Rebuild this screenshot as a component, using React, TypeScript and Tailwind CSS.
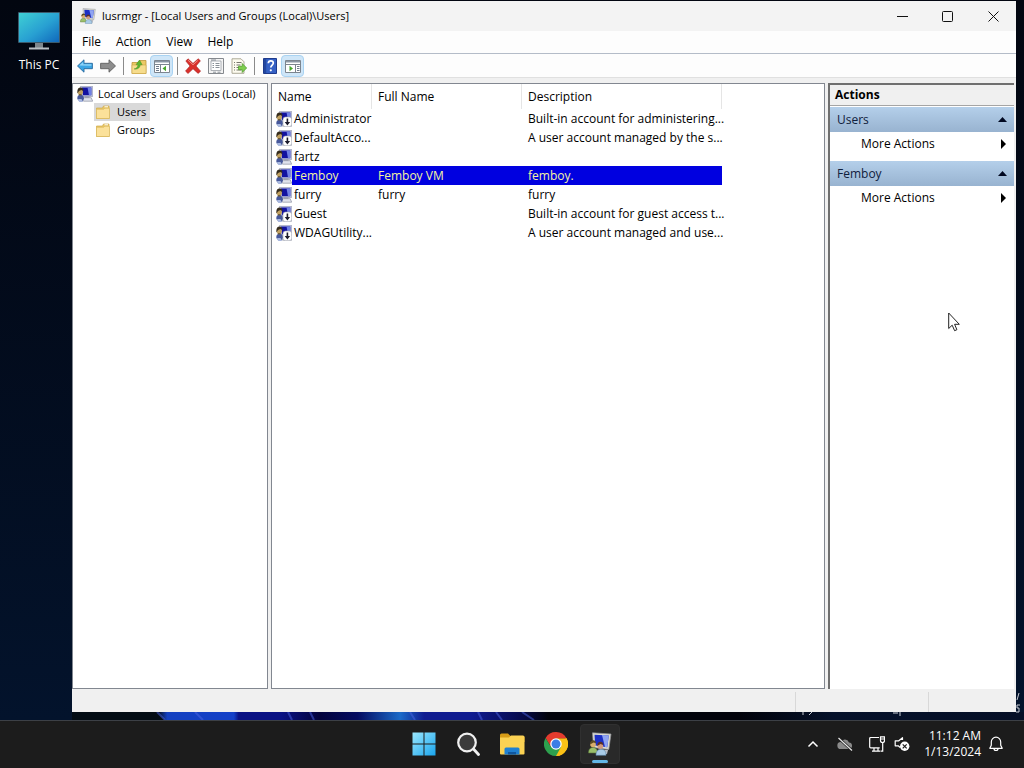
import type { ReactNode } from "react";

type User = {
  name: string;
  fullName: string;
  description: string;
  disabled?: boolean;
};

const USERS: User[] = [
  { name: "Administrator", fullName: "", description: "Built-in account for administering...", disabled: true },
  { name: "DefaultAcco...", fullName: "", description: "A user account managed by the s...", disabled: true },
  { name: "fartz", fullName: "", description: "" },
  { name: "Femboy", fullName: "Femboy VM", description: "femboy." },
  { name: "furry", fullName: "furry", description: "furry" },
  { name: "Guest", fullName: "", description: "Built-in account for guest access t...", disabled: true },
  { name: "WDAGUtility...", fullName: "", description: "A user account managed and use...", disabled: true },
];

const SELECTED = "Femboy";

/* ---------- icons ---------- */

// Monitor with two people in front of it
function GroupIcon({ size = 16 }: { size?: number }) {
  return (
    <svg width={size} height={size} viewBox="0 0 24 24" aria-hidden="true">
      <path d="M4.500.8 23 2 20.800 17.500 5.500 15.500z" fill="#dcdcd0" stroke="#8f9098" strokeWidth=".7" />
      <path d="M6.500 2.700 20.800 3.500 19.200 15.300 7.200 13.600z" fill="#1c2fc4" />
      <path d="M14 3.100 20.800 3.500 19.200 15.300 17 15z" fill="#8fa4f2" />
      <path d="M12 17.500 20 18l-1 4-6 .5z" fill="#b9bcc2" />
      <path d="M.5 21c0-4 2-5.500 4.500-5.500S9.500 17 9.500 21z" fill="#9bbf6a" stroke="#55713a" strokeWidth=".6" />
      <circle cx="5" cy="12.500" r="2.800" fill="#d9ae6c" />
      <path d="M2 12.500c0-3 1.500-4.300 3.200-4.300s3 1.300 2.800 3L5.500 10.500z" fill="#5b4a22" />
      <path d="M8 23.300c0-4.300 2-6 5-6s5 1.500 5 6z" fill="#a9cbe6" stroke="#5d87a8" strokeWidth=".6" />
      <circle cx="12.300" cy="14" r="2.900" fill="#d19a80" />
      <path d="M9.200 14c0-3 1.500-4.200 3.200-4.200 1.900 0 3.100 1.400 2.900 3.300l-2.800-1.100z" fill="#5a3024" />
    </svg>
  );
}

// One user beside a computer; disabled accounts carry the arrow badge
function UserIcon({ disabled = false }: { disabled?: boolean }) {
  return (
    <svg className="shrink-0" width="16" height="16" viewBox="0 0 16 16" aria-hidden="true">
      <path d="M3.500.3h12.200v10.200H5z" fill="#c3c9e0" stroke="#8e94ac" strokeWidth=".6" />
      <path d="M5 1.500h9.300v7.800H6z" fill="#1212a0" />
      <path d="M10.500 1.500h3.800v7.800H12z" fill="#6f80e4" />
      <path d="M7.500 10.500h5v1.200h-5z" fill="#8a90a8" />
      <path d="M5.500 11.700h8.700l1.500 3.500H6.500z" fill="#dfe2ec" stroke="#7c8194" strokeWidth=".6" />
      <path d="M.3 13c-.2-3.200 1-4.300 3.200-4.300 1.800 0 3.300 1 3.500 3.800l-1.500 3h-3z" fill="#46589c" />
      <path d="M1 13h3.500l1.500 2.700H2z" fill="#a9b9e0" />
      <path d="M1.200 3.200h4l.8 3-1.500 3H2L.8 7z" fill="#c0a060" />
      <path d="M.4 7.500C-.1 3.500 1.300 1.500 3.500 1.500c2 0 3.200 1.400 2.900 3.500L4.300 4 2 5z" fill="#352c1c" />
      <path d="M1.800 8.800h2.800" stroke="#352c1c" strokeWidth=".8" />
      {disabled && (
        <>
          <rect x="7" y="6" width="8.700" height="9.700" rx="2.500" fill="#fff" stroke="#a0a4b0" strokeWidth=".6" />
          <path d="M10.600 7.500h1.600V11h1.900l-2.700 3.500L8.700 11h1.900z" fill="#1b1b2b" />
        </>
      )}
    </svg>
  );
}

function FolderIcon() {
  return (
    <svg className="shrink-0" width="16" height="16" viewBox="0 0 16 16" aria-hidden="true">
      <path d="M1.500 4h6l1-2h5.500v12.500H1.500z" fill="#e9c765" stroke="#d0a94a" strokeWidth=".7" />
      <path d="M9.500 2.800h3.500" stroke="#fff" strokeWidth="1" />
      <path d="M1.500 5.200h7.300l1-1h4.700v10.300h-13z" fill="#fbe19a" stroke="#d9b75c" strokeWidth=".7" />
    </svg>
  );
}

function ArrowIcon({ forward = false }: { forward?: boolean }) {
  return (
    <svg width="16" height="16" viewBox="0 0 16 16" aria-hidden="true">
      {forward ? (
        <path d="M15.500 8 9 1.800v3.500H.6v5.400H9v3.500z" fill="#8d8d8d" stroke="#5f5f5f" strokeWidth=".9" strokeLinejoin="round" />
      ) : (
        <>
          <path d="M.5 8 7 1.800v3.500h8.400v5.400H7v3.500z" fill="#3ba5e4" stroke="#27689c" strokeWidth=".9" strokeLinejoin="round" />
          <path d="M2.200 7.600 6.200 4v2.300h8.200v1.500z" fill="#8fd3f7" />
        </>
      )}
    </svg>
  );
}

function UpFolderIcon() {
  return (
    <svg width="16" height="16" viewBox="0 0 16 16" aria-hidden="true">
      <path d="M1 4.500h6l1.500-2H15v13H1z" fill="#ecc964" stroke="#bf9738" strokeWidth=".8" />
      <path d="M1 7h14v8.500H1z" fill="#f6dc8c" stroke="#cfa94a" strokeWidth=".6" />
      <path d="M3 11c2.500-.5 3.800-2 4-4.200L5 6.600 8.500 2l2.700 4.800-1.900-.1C9 9.500 7 11.700 3 11z" fill="#5cb531" stroke="#3b8520" strokeWidth=".4" />
    </svg>
  );
}

function PaneIcon({ right = false }: { right?: boolean }) {
  return (
    <svg width="18" height="16" viewBox="0 0 18 16" aria-hidden="true">
      <path d="M1.500 2.500h15v12h-15z" fill="#fff" stroke="#7c858f" />
      <path d="M2 3h14v1.500H2z" fill="#8b97a5" />
      <path d="M2 6.500h14" stroke="#7c858f" />
      <path d={right ? "M11.500 6.500v8" : "M7.500 6.500v8"} stroke="#7c858f" />
      <path d={right ? "M13 8.500h2.500M13 10.500h2.500M13 12.500h2.500" : "M3 8.500h3M3 10.500h3M3 12.500h3"} stroke="#6f7c8c" />
      <path d={right ? "M5.500 7.800v5.400L9 10.500z" : "M13 7.800v5.400L9.500 10.500z"} fill="#47a82b" />
    </svg>
  );
}

function DeleteIcon() {
  return (
    <svg width="16" height="16" viewBox="0 0 16 16" aria-hidden="true">
      <path d="M3 .8 8 5.400 13.200.8l2.200 2L11 8l4.600 5.200-2.500 2.200L8 10.800l-5 4.700-2.500-2.400L5 8 .8 3z" fill="#d9302b" stroke="#a81e1e" strokeWidth=".6" strokeLinejoin="round" />
      <path d="M3 2.200 8 6.800l4.800-4.300" fill="none" stroke="#f08a80" strokeWidth="1" />
    </svg>
  );
}

function PropertiesIcon() {
  return (
    <svg width="16" height="16" viewBox="0 0 16 16" aria-hidden="true">
      <path d="M.5.5h15v15H.5z" fill="#f4f4f4" stroke="#85898e" />
      <path d="M3 3h10v9.500H3z" fill="#fff" stroke="#9aa0a6" strokeWidth=".8" />
      <path d="M3 2h5M4.500 5.500H6M7.500 5.500h4M4.500 7.500H6M7.500 7.500h4M4.500 9.500H6M7.500 9.500h4M5 14.200h3M9.500 14.200h3" stroke="#7d848c" strokeWidth=".9" />
    </svg>
  );
}

function ExportIcon() {
  return (
    <svg width="16" height="16" viewBox="0 0 16 16" aria-hidden="true">
      <path d="M1 .8h9l3 3v11.500H1z" fill="#fdfbef" stroke="#a4a08c" strokeWidth=".9" />
      <path d="M3 4.500h1M5.500 4.500h5M3 7h1M5.500 7h4M3 9.500h1M5.500 9.500h3M3 12h1M5.500 12h5" stroke="#77776c" />
      <path d="M7.500 8.300h3.700V5.500l4.500 4.500-4.500 4.500v-2.800H7.500z" fill="#7fce4e" stroke="#4b9a2a" strokeWidth=".7" />
    </svg>
  );
}

function HelpIcon() {
  return (
    <svg width="16" height="16" viewBox="0 0 16 16" aria-hidden="true">
      <path d="M1.500.5h13v15h-13z" fill="#3560c4" stroke="#1f3b8c" />
      <path d="M2 1h2.200v14H2z" fill="#23479f" />
      <path d="M6.300 5.300c0-1.700 1-2.500 2.500-2.500s2.500.8 2.500 2.200c0 2-2.500 2.200-2.500 4.500" fill="none" stroke="#fff" strokeWidth="1.700" />
      <circle cx="8.800" cy="12.300" r="1.100" fill="#fff" />
    </svg>
  );
}

function ThisPcIcon() {
  return (
    <svg width="42" height="39" viewBox="0 0 42 39" aria-hidden="true">
      <defs>
        <linearGradient id="pc" x1="0" y1="0" x2="1" y2="1">
          <stop offset="0" stopColor="#3fd0d4" />
          <stop offset=".55" stopColor="#28a0d2" />
          <stop offset="1" stopColor="#1068bc" />
        </linearGradient>
      </defs>
      <path d="M17 31h8v5h-8z" fill="#7d858c" />
      <path d="M11 35.500h20v2H11z" fill="#b8bec4" />
      <rect x="0" y="0" width="42" height="31" rx="1" fill="#3b5a6c" />
      <rect x="1" y="1" width="40" height="29" fill="url(#pc)" />
    </svg>
  );
}

/* ---------- small pieces ---------- */

function ToolButton({ label, active, children }: { label: string; active?: boolean; children: ReactNode }) {
  return (
    <button
      type="button"
      aria-label={label}
      className={`flex h-[22px] w-[23px] items-center justify-center ${active ? "rounded-sm border border-[#a9d3f2] bg-[#cfe6f8]" : ""}`}
    >
      {children}
    </button>
  );
}

function ToolSeparator() {
  return (
    <div className="flex w-2 justify-center">
      <div className="h-[18px] w-px bg-[#8a8a8a]" />
    </div>
  );
}

function ActionGroup({ title }: { title: string }) {
  return (
    <section className="mb-[5px]">
      <button type="button" className="flex h-[25px] w-full items-center justify-between bg-linear-to-b from-[#b4cfea] to-[#98b3d0] px-[7px] text-[#10203c]">
        {title}
        <svg width="9" height="5" viewBox="0 0 9 5" aria-hidden="true">
          <path d="M4.500 0 9 5H0z" fill="#000820" />
        </svg>
      </button>
      <button type="button" className="flex h-6 w-full items-center justify-between pr-2 pl-[31px]">
        More Actions
        <svg width="5" height="10" viewBox="0 0 5 10" aria-hidden="true">
          <path d="M0 0v10l5-5z" fill="#000" />
        </svg>
      </button>
    </section>
  );
}

function TaskButton({ label, active, children }: { label: string; active?: boolean; children: ReactNode }) {
  return (
    <button
      type="button"
      aria-label={label}
      className={`relative flex h-10 w-10 items-center justify-center rounded ${active ? "border border-[#303030] bg-[#292929]" : ""}`}
    >
      {children}
      {active && <span className="absolute bottom-0 h-[3px] w-4 rounded-full bg-[#63b7e6]" />}
    </button>
  );
}

/* ---------- window ---------- */

function TitleBar() {
  return (
    <header className="flex h-[30px] items-center bg-[#f3f3f3] pl-2">
      <GroupIcon />
      <h1 className="ml-[6px] flex-1 text-[11px]">lusrmgr - [Local Users and Groups (Local)\Users]</h1>
      <button type="button" aria-label="Minimize" className="flex h-full w-[46px] items-center justify-center">
        <svg width="11" height="11" viewBox="0 0 11 11"><path d="M0 5.500h11" stroke="#111" /></svg>
      </button>
      <button type="button" aria-label="Maximize" className="flex h-full w-[45px] items-center justify-center">
        <svg width="11" height="11" viewBox="0 0 11 11"><rect x=".5" y=".5" width="10" height="10" rx="1" fill="none" stroke="#111" /></svg>
      </button>
      <button type="button" aria-label="Close" className="flex h-full w-[46px] items-center justify-center">
        <svg width="11" height="11" viewBox="0 0 11 11"><path d="M.5.5l10 10M10.500.5l-10 10" stroke="#111" /></svg>
      </button>
    </header>
  );
}

function MenuBar() {
  return (
    <nav className="flex h-[23px] items-center gap-[15px] border-b border-[#b4bcc8] bg-[#fdfdfd] pl-[10px]">
      {["File", "Action", "View", "Help"].map((item) => (
        <button key={item} type="button">{item}</button>
      ))}
    </nav>
  );
}

function ToolBar() {
  return (
    <div className="flex h-6 items-center border-b border-[#e0e0e0] bg-[#fdfdfd] pl-px">
      <ToolButton label="Back"><ArrowIcon /></ToolButton>
      <ToolButton label="Forward"><ArrowIcon forward /></ToolButton>
      <ToolSeparator />
      <ToolButton label="Up one level"><UpFolderIcon /></ToolButton>
      <ToolButton label="Show console tree" active><PaneIcon /></ToolButton>
      <ToolSeparator />
      <ToolButton label="Delete"><DeleteIcon /></ToolButton>
      <ToolButton label="Properties"><PropertiesIcon /></ToolButton>
      <ToolButton label="Export list"><ExportIcon /></ToolButton>
      <ToolSeparator />
      <ToolButton label="Help"><HelpIcon /></ToolButton>
      <ToolButton label="Show action pane" active><PaneIcon right /></ToolButton>
    </div>
  );
}

function ConsoleTree() {
  return (
    <aside className="w-[196px] shrink-0 border border-[#828790] bg-white text-[11px]">
      <button type="button" className="mt-px flex h-[18px] items-center gap-[5px] pl-1 whitespace-nowrap">
        <UserIcon />
        Local Users and Groups (Local)
      </button>
      <ul className="pl-[21px]">
        <li>
          <button type="button" className="flex h-[18px] items-center gap-[6px] bg-[#d9d9d9] pr-1 pl-px">
            <FolderIcon />
            Users
          </button>
        </li>
        <li>
          <button type="button" className="flex h-[18px] items-center gap-[6px] pr-1 pl-px">
            <FolderIcon />
            Groups
          </button>
        </li>
      </ul>
    </aside>
  );
}

function UserTable() {
  return (
    <main className="min-w-0 flex-1 border border-[#828790] bg-white">
      <table className="w-[450px] table-fixed border-separate border-spacing-0 text-left whitespace-nowrap">
        <thead>
          <tr className="h-[25px]">
            <th className="w-[100px] border-r border-[#e5e5e5] p-0 pl-[6px] font-normal">Name</th>
            <th className="w-[150px] border-r border-[#e5e5e5] p-0 pl-[6px] font-normal">Full Name</th>
            <th className="w-[200px] border-r border-[#e5e5e5] p-0 pl-[6px] font-normal">Description</th>
          </tr>
        </thead>
        <tbody>
          {USERS.map((user) => {
            const fill = user.name === SELECTED ? "bg-[#0000e0] text-[#f4f4a0]" : "";
            return (
              <tr key={user.name} className="h-[19px]">
                <td className="p-0">
                  <div className="flex h-[19px] items-center pl-1">
                    <UserIcon disabled={user.disabled} />
                    <span className={`flex h-full flex-1 items-center pl-0.5 ${fill}`}>{user.name}</span>
                  </div>
                </td>
                <td className={`p-0 pl-[6px] ${fill}`}>{user.fullName}</td>
                <td className={`p-0 pl-[6px] ${fill}`}>{user.description}</td>
              </tr>
            );
          })}
        </tbody>
      </table>
    </main>
  );
}

function ActionsPane() {
  return (
    <aside className="mr-0.5 w-[186px] shrink-0 border-t-2 border-l-2 border-[#6f6f6f] bg-white">
      <h2 className="mb-px flex h-[21px] items-center border-b border-[#a5a5a5] bg-[#f0f0f0] pl-[5px] font-bold">Actions</h2>
      <ActionGroup title="Users" />
      <ActionGroup title="Femboy" />
    </aside>
  );
}

function ConsoleWindow() {
  return (
    <div className="mt-px mr-2 mb-2 flex min-w-0 flex-1 flex-col bg-[#f0f0f0]">
      <TitleBar />
      <MenuBar />
      <ToolBar />
      <div className="flex min-h-0 flex-1 gap-[3px] pt-[5px]">
        <ConsoleTree />
        <UserTable />
        <ActionsPane />
      </div>
      <footer className="flex h-[23px] justify-end pt-[3px]">
        <div className="w-[133px] border-l border-[#d8d8d8]" />
        <div className="w-[88px] border-l border-[#d8d8d8]" />
      </footer>
    </div>
  );
}

// Bottom edge of the bloom wallpaper, with the ends of the desktop watermark
function Wallpaper() {
  return (
    <svg className="absolute bottom-0 left-0 h-8 w-full" viewBox="0 0 1024 32" preserveAspectRatio="none" aria-hidden="true">
      <defs>
        <linearGradient id="bloom" x1="72" x2="1024" y1="0" y2="0" gradientUnits="userSpaceOnUse">
          <stop offset="0" stopColor="#030c14" />
          <stop offset=".09" stopColor="#030c14" />
          <stop offset=".1" stopColor="#1440c0" />
          <stop offset=".17" stopColor="#1440c8" />
          <stop offset=".175" stopColor="#0a1284" />
          <stop offset=".22" stopColor="#0a1284" />
          <stop offset=".26" stopColor="#03033c" />
          <stop offset=".3" stopColor="#040b60" />
          <stop offset=".345" stopColor="#1b6ac8" />
          <stop offset=".37" stopColor="#101c90" />
          <stop offset=".42" stopColor="#101c90" />
          <stop offset=".47" stopColor="#060a50" />
          <stop offset=".5" stopColor="#01020a" />
          <stop offset=".7" stopColor="#01020a" />
          <stop offset=".8" stopColor="#05112a" />
          <stop offset="1" stopColor="#050f26" />
        </linearGradient>
      </defs>
      <path d="M72 24h952v8H72z" fill="#030c14" />
      <path d="M157 24h867v8H165z" fill="url(#bloom)" />
      <path d="M157 24l8 8M195 24l8 8M288 24l4 8M310 24l4 8M410 24l5 8M478 24l4 8M496 24l6 8M522 24l12 8" stroke="#4a62e0" strokeWidth="2" opacity=".5" />
      <path d="M803 24v3M812 24l-3 3M893 25h5M900 24v4M1019 5l-2 7M1020 17h-3v3h2v4h-3" fill="none" stroke="#c8ccd4" strokeWidth="1" />
    </svg>
  );
}

/* ---------- taskbar ---------- */

function Taskbar() {
  return (
    <footer className="grid h-12 grid-cols-[1fr_auto_1fr] items-center border-t border-[#3c4046] bg-[#1c1c1c] pb-px text-white">
      <div />
      <div className="flex gap-1">
        <TaskButton label="Start">
          <svg width="24" height="24" viewBox="0 0 24 24">
            <defs>
              <linearGradient id="win" x1="0" y1="0" x2="1" y2="1">
                <stop offset="0" stopColor="#9be7fd" />
                <stop offset="1" stopColor="#19a5ee" />
              </linearGradient>
            </defs>
            <path d="M.5.5h11v11H.5zM12.500.5h11v11h-11zM.5 12.500h11v11H.5zM12.500 12.500h11v11h-11z" fill="url(#win)" />
          </svg>
        </TaskButton>
        <TaskButton label="Search">
          <svg width="24" height="24" viewBox="0 0 24 24">
            <circle cx="11" cy="10.500" r="8.800" fill="#3b3b3b" stroke="#f0f0f0" strokeWidth="2.200" />
            <path d="M17.500 17l5 5.500" stroke="#f0f0f0" strokeWidth="2.800" strokeLinecap="round" />
          </svg>
        </TaskButton>
        <TaskButton label="File Explorer">
          <svg width="26" height="24" viewBox="0 0 26 24">
            <path d="M1 3q0-1.500 1.500-1.500H9L11.500 4H24q1.500 0 1.500 1.500V10H1z" fill="#d79c17" />
            <path d="M1 5.500h9L12 3.500h12q1.500 0 1.500 1.500v16.500q0 1-1 1H2q-1 0-1-1z" fill="#fbd253" />
            <path d="M5.500 22.500V17q0-1.500 1.500-1.500h12q1.500 0 1.500 1.500v5.500z" fill="#1f80d2" />
            <path d="M9 22.500V20h8v2.500z" fill="#10579f" />
          </svg>
        </TaskButton>
        <TaskButton label="Google Chrome">
          <svg width="24" height="24" viewBox="0 0 48 48">
            <path d="M24 24 44.800 12A24 24 0 0 1 24 48z" fill="#fbc116" />
            <path d="M24 12.500h21A24 24 0 0 1 24 48l10-18z" fill="#fbc116" />
            <path d="M3.200 12A24 24 0 0 1 45 12.500H24L14 30z" fill="#e33b2e" />
            <path d="M3.200 12 14 30l20 0L24 48A24 24 0 0 1 3.200 12z" fill="#2da04e" />
            <circle cx="24" cy="24" r="11.500" fill="#fff" />
            <circle cx="24" cy="24" r="9" fill="#3c7de6" />
          </svg>
        </TaskButton>
        <TaskButton label="lusrmgr" active>
          <GroupIcon size={24} />
        </TaskButton>
      </div>
      <div className="flex items-center justify-end pr-5">
        <button type="button" aria-label="Show hidden icons" className="mr-[18px]">
          <svg width="12" height="12" viewBox="0 0 12 12"><path d="M1.500 8.500 6 4l4.500 4.500" fill="none" stroke="#fff" strokeWidth="1.500" /></svg>
        </button>
        <button type="button" aria-label="OneDrive" className="mr-4">
          <svg width="16" height="16" viewBox="0 0 16 16">
            <path d="M4 13a3.500 3.500 0 0 1-.3-7A4.500 4.500 0 0 1 12 6.500 3.300 3.300 0 0 1 12.500 13z" fill="#8a8a8a" />
            <path d="M1.500 2 15 14.500" stroke="#1c1c1c" strokeWidth="2.500" />
            <path d="M1.500 2 15 14.500" stroke="#e8e8e8" strokeWidth="1.200" />
          </svg>
        </button>
        <button type="button" aria-label="Network" className="mr-[9px]">
          <svg width="16" height="16" viewBox="0 0 16 16" fill="none" stroke="#fff" strokeWidth="1.200">
            <path d="M10 1.500H1.700Q.7 1.500.7 2.500v8.300q0 1 1 1h9M5 12v3M9 12v3M3 15.200h8M13.700 6.500v8.700h-2.200" />
            <path d="M11.500.8h4v3.700q0 2-2 2t-2-2zM11.500 3h4" />
          </svg>
        </button>
        <button type="button" aria-label="Volume muted" className="mr-[14px]">
          <svg width="16" height="16" viewBox="0 0 16 16">
            <path d="M8.500 4V1.700L4.800 4.800H1.200v5h3l2 1.700" fill="none" stroke="#fff" strokeWidth="1.200" strokeLinejoin="round" />
            <circle cx="10.700" cy="10.300" r="4.700" fill="#fff" />
            <path d="M8.700 8.300l4 4M12.700 8.300l-4 4" stroke="#1c1c1c" strokeWidth="1.200" />
          </svg>
        </button>
        <button type="button" className="mr-[7px] text-right leading-4">
          11:12 AM
          <br />
          1/13/2024
        </button>
        <button type="button" aria-label="Notifications">
          <svg width="16" height="16" viewBox="0 0 16 16" fill="none" stroke="#fff" strokeWidth="1.200">
            <path d="M8 1.200a4.700 4.700 0 0 0-4.700 4.700v3.300L1.800 12.300h12.400l-1.500-3.100V5.900A4.700 4.700 0 0 0 8 1.200z" strokeLinejoin="round" />
            <path d="M6 12.500a2 2 0 0 0 4 0" />
          </svg>
        </button>
      </div>
    </footer>
  );
}

export default function App() {
  return (
    <div className="flex h-screen flex-col overflow-hidden font-['Open_Sans','Noto_Sans',sans-serif] text-xs text-black">
      <div className="relative flex min-h-0 flex-1 bg-linear-to-b from-[#020610] to-[#03132c]">
        <Wallpaper />
        <div className="relative flex w-[72px] shrink-0 justify-end">
          <button type="button" className="flex h-[78px] w-[66px] flex-col items-center pt-3 text-white">
            <ThisPcIcon />
            <span className="mt-[6px]">This PC</span>
          </button>
        </div>
        <div className="relative flex min-w-0 flex-1">
          <ConsoleWindow />
        </div>
        {/* mouse pointer */}
        <svg className="absolute top-[312px] left-[948px]" width="12" height="20" viewBox="0 0 12 20" aria-hidden="true">
          <path d="M.7 1v15.500l3.500-3.300 2.400 5.500 2.300-1-2.300-5.400h4.700z" fill="#fff" stroke="#222" strokeWidth="1" />
        </svg>
      </div>
      <Taskbar />
    </div>
  );
}
